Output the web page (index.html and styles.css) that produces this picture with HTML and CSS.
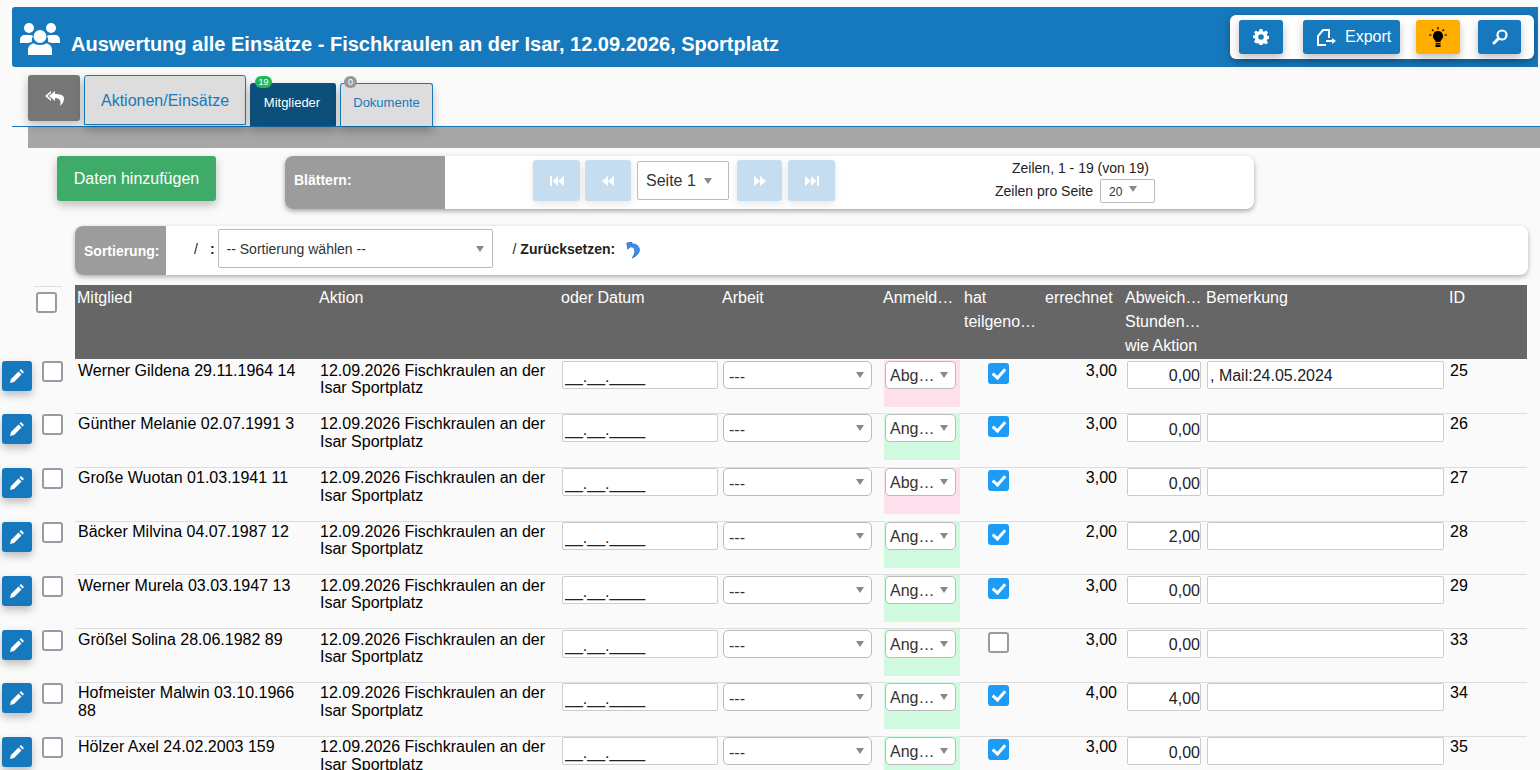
FILE: index.html
```html
<!DOCTYPE html>
<html lang="de">
<head>
    <meta charset="UTF-8">
    <title>Auswertung alle Einsätze</title>
    <link rel="stylesheet" href="styles.css">
</head>
<body>
    <header class="topbar">
        <svg class="users-icon" viewBox="0 0 40 32" fill="#fff">
            <circle cx="9" cy="5" r="5"/>
            <circle cx="31" cy="5" r="5"/>
            <circle cx="20" cy="13.5" r="6.5"/>
            <path d="M0 20v-3c0-3 2-5 5-5h5c1 0 2 .4 3 1-1 2-1.500 4-1 6-2 .4-4 1-5 1z"/>
            <path d="M40 20v-3c0-3-2-5-5-5h-5c-1 0-2 .4-3 1 1 2 1.500 4 1 6 2 .4 4 1 5 1z"/>
            <path d="M8 32v-5c0-4 3-6.500 6-6.500 2 1 4 1.500 6 1.500s4-.5 6-1.500c3 0 6 2.500 6 6.500v5z"/>
        </svg>
        <h1>Auswertung alle Einsätze - Fischkraulen an der Isar, 12.09.2026, Sportplatz</h1>
        <div class="toolbar">
            <button class="btn btn-gear">
                <svg width="16" height="16" viewBox="0 0 16 16"><path fill="#fff" fill-rule="evenodd" d="M6.600 0h2.800l.4 2.200 1.300.6L13 1.500l2 2-1.300 1.900.6 1.300 2.200.4v2.800l-2.200.4-.6 1.300 1.300 1.900-2 2-1.900-1.300-1.300.6-.4 2.200H6.600l-.4-2.200-1.300-.6L3 14.500l-2-2 1.300-1.900-.6-1.300L-.5 8.900V6.600l2.200-.4.6-1.300L1 3.500l2-2 1.900 1.300 1.300-.6zM8 5.200a2.800 2.800 0 1 0 0 5.600 2.800 2.800 0 0 0 0-5.600z"/></svg>
            </button>
            <button class="btn btn-export">
                <svg width="19" height="17" viewBox="0 0 19 17"><path fill="none" stroke="#fff" stroke-width="2" d="M12 9V1H6L1 7v9h8"/><path fill="#fff" d="M9 11h6V9l4 3-4 3v-2H9z"/></svg>
                Export
            </button>
            <button class="btn btn-idea">
                <svg width="18" height="20" viewBox="0 0 18 20"><path fill="#000" d="M9 4a5 5 0 0 1 3 9l-.5 2h-5L6 13A5 5 0 0 1 9 4zM6.500 16h5v1.500h-5zM6.500 18h5v2h-5z"/><path stroke="#000" stroke-width="1.200" d="M9 0v2.500M3 2.500l1.500 1.500M15 2.500L13.500 4M0 8h2.500M15.500 8H18"/></svg>
            </button>
            <button class="btn btn-search">
                <svg width="16" height="16" viewBox="0 0 16 16"><circle cx="10" cy="6" r="4.500" fill="none" stroke="#fff" stroke-width="2.200"/><path stroke="#fff" stroke-width="3" stroke-linecap="round" d="M6 10l-4 4"/></svg>
            </button>
        </div>
    </header>

    <nav class="tabs">
        <button class="back-btn">
            <svg width="19" height="15" viewBox="0 0 19 15"><path fill="#fff" d="M6 0L0 5l6 5V8L2.500 5 6 2z"/><path fill="#fff" d="M10 0L4 5l6 5V7c3 0 5 1 5.500 4 .2 1.500-.2 3-.7 4 3-2 4.200-5 4.200-7.500C19 4 15 3 10 3z"/></svg>
        </button>
        <a class="tab tab-large">Aktionen/Einsätze</a>
        <a class="tab tab-active">Mitglieder<span class="badge badge-green">19</span></a>
        <a class="tab">Dokumente<span class="badge badge-grey">0</span></a>
    </nav>
    <div class="greybar"></div>

    <section class="actions">
        <button class="add-btn">Daten hinzufügen</button>
        <div class="pager">
            <div class="panel-label pager-label">Blättern:</div>
            <div class="pager-nav">
                <button class="page-btn page-w47"><svg width="14" height="10" viewBox="0 0 14 10"><path fill="#fff" d="M0 0h2v10H0zM2.500 5L8 0v10zM8 5l6-5v10z"/></svg></button>
                <button class="page-btn page-w46"><svg width="12" height="10" viewBox="0 0 12 10"><path fill="#fff" d="M0 5l6-5v10zM6 5l6-5v10z"/></svg></button>
                <div class="select page-select">Seite 1<i class="caret"></i></div>
                <button class="page-btn page-w45 page-next"><svg width="12" height="10" viewBox="0 0 12 10"><path fill="#fff" d="M12 5L6 0v10zM6 5L0 0v10z"/></svg></button>
                <button class="page-btn page-w47 page-last"><svg width="14" height="10" viewBox="0 0 14 10"><path fill="#fff" d="M14 0h-2v10h2zM11.500 5L6 0v10zM6 5L0 0v10z"/></svg></button>
            </div>
            <div class="pager-info">
                <div>Zeilen, 1 - 19 (von 19)</div>
                <div class="per-page">Zeilen pro Seite <div class="select per-select">20<i class="caret"></i></div></div>
            </div>
        </div>
    </section>

    <section class="sortbar">
        <div class="panel-label sort-label">Sortierung:</div>
        <span class="sort-slash">/</span>
        <b class="sort-colon">:</b>
        <div class="select sort-select">-- Sortierung wählen --<i class="caret"></i></div>
        <span class="sort-reset">/ <b>Zurücksetzen:</b></span>
        <svg class="undo-icon" width="15" height="17" viewBox="0 0 17 19"><path fill="#3b8df0" stroke="#1b5fc0" stroke-width=".8" d="M1 1l1 7 2.500-2.500C7 5 9.500 6 10 9c.4 3-1 6-3 9 5-2 9-6 8-10.500C14 3 9 1 5.500 2.500L7 0z"/></svg>
    </section>

    <div class="table-head">
        <div class="head-tools"><span class="check head-check"></span></div>
        <div class="cells head-cells">
            <div>Mitglied</div>
            <div>Aktion</div>
            <div>oder Datum</div>
            <div>Arbeit</div>
            <div>Anmeld…</div>
            <div>hat<br>teilgeno…</div>
            <div>errechnet</div>
            <div>Abweich…<br>Stunden…<br>wie Aktion</div>
            <div>Bemerkung</div>
            <div>ID</div>
        </div>
    </div>

    <div class="row">
        <div class="row-tools"><button class="edit-btn"><svg width="14" height="14" viewBox="0 0 14 14"><path fill="#fff" d="M0 14l1-4 7.500-7.500 3 3L4 13zM9.500 1.500L11 0l3 3-1.500 1.500z"/></svg></button><span class="check"></span></div>
        <div class="cells">
            <div class="name">Werner Gildena 29.11.1964 14</div>
            <div class="aktion">12.09.2026 Fischkraulen an der Isar Sportplatz</div>
            <div><input class="field date" value="__.__.____"></div>
            <div><div class="select work">---<i class="caret"></i></div></div>
            <div class="state state-no"><div class="select">Abg…<i class="caret"></i></div></div>
            <div class="center"><span class="tick"></span></div>
            <div class="num">3,00</div>
            <div><input class="field dev" value="0,00"></div>
            <div><input class="field note" value=", Mail:24.05.2024"></div>
            <div class="id">25</div>
        </div>
    </div>
    <div class="row">
        <div class="row-tools"><button class="edit-btn"><svg width="14" height="14" viewBox="0 0 14 14"><path fill="#fff" d="M0 14l1-4 7.500-7.500 3 3L4 13zM9.500 1.500L11 0l3 3-1.500 1.500z"/></svg></button><span class="check"></span></div>
        <div class="cells">
            <div class="name">Günther Melanie 02.07.1991 3</div>
            <div class="aktion">12.09.2026 Fischkraulen an der Isar Sportplatz</div>
            <div><input class="field date" value="__.__.____"></div>
            <div><div class="select work">---<i class="caret"></i></div></div>
            <div class="state state-yes"><div class="select">Ang…<i class="caret"></i></div></div>
            <div class="center"><span class="tick"></span></div>
            <div class="num">3,00</div>
            <div><input class="field dev" value="0,00"></div>
            <div><input class="field note" value=""></div>
            <div class="id">26</div>
        </div>
    </div>
    <div class="row">
        <div class="row-tools"><button class="edit-btn"><svg width="14" height="14" viewBox="0 0 14 14"><path fill="#fff" d="M0 14l1-4 7.500-7.500 3 3L4 13zM9.500 1.500L11 0l3 3-1.500 1.500z"/></svg></button><span class="check"></span></div>
        <div class="cells">
            <div class="name">Große Wuotan 01.03.1941 11</div>
            <div class="aktion">12.09.2026 Fischkraulen an der Isar Sportplatz</div>
            <div><input class="field date" value="__.__.____"></div>
            <div><div class="select work">---<i class="caret"></i></div></div>
            <div class="state state-no"><div class="select">Abg…<i class="caret"></i></div></div>
            <div class="center"><span class="tick"></span></div>
            <div class="num">3,00</div>
            <div><input class="field dev" value="0,00"></div>
            <div><input class="field note" value=""></div>
            <div class="id">27</div>
        </div>
    </div>
    <div class="row">
        <div class="row-tools"><button class="edit-btn"><svg width="14" height="14" viewBox="0 0 14 14"><path fill="#fff" d="M0 14l1-4 7.500-7.500 3 3L4 13zM9.500 1.500L11 0l3 3-1.500 1.500z"/></svg></button><span class="check"></span></div>
        <div class="cells">
            <div class="name">Bäcker Milvina 04.07.1987 12</div>
            <div class="aktion">12.09.2026 Fischkraulen an der Isar Sportplatz</div>
            <div><input class="field date" value="__.__.____"></div>
            <div><div class="select work">---<i class="caret"></i></div></div>
            <div class="state state-yes"><div class="select">Ang…<i class="caret"></i></div></div>
            <div class="center"><span class="tick"></span></div>
            <div class="num">2,00</div>
            <div><input class="field dev" value="2,00"></div>
            <div><input class="field note" value=""></div>
            <div class="id">28</div>
        </div>
    </div>
    <div class="row">
        <div class="row-tools"><button class="edit-btn"><svg width="14" height="14" viewBox="0 0 14 14"><path fill="#fff" d="M0 14l1-4 7.500-7.500 3 3L4 13zM9.500 1.500L11 0l3 3-1.500 1.500z"/></svg></button><span class="check"></span></div>
        <div class="cells">
            <div class="name">Werner Murela 03.03.1947 13</div>
            <div class="aktion">12.09.2026 Fischkraulen an der Isar Sportplatz</div>
            <div><input class="field date" value="__.__.____"></div>
            <div><div class="select work">---<i class="caret"></i></div></div>
            <div class="state state-yes"><div class="select">Ang…<i class="caret"></i></div></div>
            <div class="center"><span class="tick"></span></div>
            <div class="num">3,00</div>
            <div><input class="field dev" value="0,00"></div>
            <div><input class="field note" value=""></div>
            <div class="id">29</div>
        </div>
    </div>
    <div class="row">
        <div class="row-tools"><button class="edit-btn"><svg width="14" height="14" viewBox="0 0 14 14"><path fill="#fff" d="M0 14l1-4 7.500-7.500 3 3L4 13zM9.500 1.500L11 0l3 3-1.500 1.500z"/></svg></button><span class="check"></span></div>
        <div class="cells">
            <div class="name">Größel Solina 28.06.1982 89</div>
            <div class="aktion">12.09.2026 Fischkraulen an der Isar Sportplatz</div>
            <div><input class="field date" value="__.__.____"></div>
            <div><div class="select work">---<i class="caret"></i></div></div>
            <div class="state state-yes"><div class="select">Ang…<i class="caret"></i></div></div>
            <div class="center"><span class="check"></span></div>
            <div class="num">3,00</div>
            <div><input class="field dev" value="0,00"></div>
            <div><input class="field note" value=""></div>
            <div class="id">33</div>
        </div>
    </div>
    <div class="row">
        <div class="row-tools"><button class="edit-btn"><svg width="14" height="14" viewBox="0 0 14 14"><path fill="#fff" d="M0 14l1-4 7.500-7.500 3 3L4 13zM9.500 1.500L11 0l3 3-1.500 1.500z"/></svg></button><span class="check"></span></div>
        <div class="cells">
            <div class="name">Hofmeister Malwin 03.10.1966 88</div>
            <div class="aktion">12.09.2026 Fischkraulen an der Isar Sportplatz</div>
            <div><input class="field date" value="__.__.____"></div>
            <div><div class="select work">---<i class="caret"></i></div></div>
            <div class="state state-yes"><div class="select">Ang…<i class="caret"></i></div></div>
            <div class="center"><span class="tick"></span></div>
            <div class="num">4,00</div>
            <div><input class="field dev" value="4,00"></div>
            <div><input class="field note" value=""></div>
            <div class="id">34</div>
        </div>
    </div>
    <div class="row">
        <div class="row-tools"><button class="edit-btn"><svg width="14" height="14" viewBox="0 0 14 14"><path fill="#fff" d="M0 14l1-4 7.500-7.500 3 3L4 13zM9.500 1.500L11 0l3 3-1.500 1.500z"/></svg></button><span class="check"></span></div>
        <div class="cells">
            <div class="name">Hölzer Axel 24.02.2003 159</div>
            <div class="aktion">12.09.2026 Fischkraulen an der Isar Sportplatz</div>
            <div><input class="field date" value="__.__.____"></div>
            <div><div class="select work">---<i class="caret"></i></div></div>
            <div class="state state-yes"><div class="select">Ang…<i class="caret"></i></div></div>
            <div class="center"><span class="tick"></span></div>
            <div class="num">3,00</div>
            <div><input class="field dev" value="0,00"></div>
            <div><input class="field note" value=""></div>
            <div class="id">35</div>
        </div>
    </div>
</body>
</html>
```

FILE: styles.css
```css
html, body {
    height: 770px;
    overflow: hidden;
}
body {
    margin: 0;
    background-color: #fafafa;
    font-family: "Liberation Sans", Arial, sans-serif;
    font-size: 16px;
    color: #222;
}
button {
    border: none;
    padding: 0;
    font-family: inherit;
    cursor: pointer;
}

/* top bar */
.topbar {
    display: flex;
    align-items: center;
    height: 60px;
    margin: 7px 2px 0 12px;
    background-color: #1779bd;
    border-radius: 3px 0 0 3px;
}
.users-icon {
    width: 40px;
    height: 32px;
    margin: 4px 11px 0 8px;
}
.topbar h1 {
    flex: 1;
    margin: 14px 0 0 0;
    font-size: 20px;
    font-weight: bold;
    color: #fff;
}
.toolbar {
    display: flex;
    align-items: flex-start;
    box-sizing: border-box;
    width: 304px;
    height: 44px;
    margin-right: 4px;
    padding: 5px 0 0 9px;
    background-color: #fff;
    border-radius: 6px;
    box-shadow: 0 3px 8px rgba(0, 0, 0, 0.3);
}
.btn {
    display: flex;
    align-items: center;
    justify-content: center;
    height: 34px;
    background-color: #1779bd;
    color: #fff;
    font-size: 16px;
    border-radius: 3px;
    box-shadow: 0 4px 8px rgba(0, 0, 0, 0.25);
}
.btn-gear { width: 44px; }
.btn-export {
    justify-content: flex-start;
    box-sizing: border-box;
    width: 97px;
    margin-left: 20px;
    padding-left: 14px;
    gap: 9px;
}
.btn-idea { width: 44px; margin-left: 16px; background-color: #ffae00; }
.btn-search { width: 43px; margin-left: 18px; }

/* tabs */
.tabs {
    display: flex;
    align-items: flex-end;
    gap: 4px;
    height: 51px;
    margin: 8px 0 0 12px;
    padding-left: 16px;
    border-bottom: 1px solid #1779bd;
}
.back-btn {
    display: flex;
    align-items: center;
    justify-content: center;
    align-self: flex-start;
    width: 52px;
    height: 46px;
    background-color: #777;
    border-radius: 3px;
    box-shadow: 0 4px 10px rgba(0, 0, 0, 0.25);
}
.tab {
    position: relative;
    display: flex;
    align-items: center;
    justify-content: center;
    box-sizing: border-box;
    width: 93px;
    height: 43px;
    padding-bottom: 5px;
    font-size: 13px;
    color: #1779bd;
    background-color: #ddd;
    border: 1px solid #1779bd;
    border-bottom-width: 0;
    border-radius: 3px 3px 0 0;
    box-shadow: 0 5px 10px rgba(0, 0, 0, 0.25);
}
.tab-large {
    width: 162px;
    height: 50px;
    margin-bottom: 1px;
    padding-bottom: 0;
    padding-top: 1px;
    font-size: 16px;
    border-bottom-width: 1px;
}
.tab-active {
    width: 86px;
    padding-right: 2px;
    color: #fff;
    background-color: #0c4f7a;
    border-color: #0c4f7a;
}
.badge {
    position: absolute;
    top: -8px;
    height: 12px;
    font-size: 9px;
    line-height: 12px;
    text-align: center;
    color: #fff;
    border-radius: 6px;
}
.badge-green { left: 4px; width: 17px; background-color: #22b85a; }
.badge-grey { left: 3px; width: 13px; background-color: #999; }
.greybar {
    height: 21px;
    margin-left: 28px;
    background-color: #a6a6a6;
}

/* add button + pager */
.actions {
    display: flex;
    align-items: flex-start;
    margin: 8px 0 0 57px;
}
.add-btn {
    width: 159px;
    height: 45px;
    font-size: 16px;
    color: #fff;
    background-color: #3fab68;
    border-radius: 3px;
    box-shadow: 0 4px 10px rgba(0, 0, 0, 0.25);
}
.pager {
    display: flex;
    width: 969px;
    height: 53px;
    margin-left: 69px;
    background-color: #fff;
    border-radius: 8px;
    box-shadow: 0 2px 5px rgba(0, 0, 0, 0.35);
}
.panel-label {
    display: flex;
    align-items: center;
    flex-shrink: 0;
    box-sizing: border-box;
    padding-left: 9px;
    font-size: 14px;
    font-weight: bold;
    color: #fff;
    background-color: #9c9c9c;
    border-radius: 8px 0 0 8px;
}
.pager-label { width: 160px; padding-bottom: 6px; }
.pager-nav {
    display: flex;
    align-items: flex-start;
    gap: 5px;
    width: 400px;
    padding: 4px 0 0 88px;
    box-sizing: border-box;
}
.page-btn {
    display: flex;
    align-items: center;
    justify-content: center;
    height: 41px;
    background-color: #c6dcef;
    border-radius: 3px;
    box-shadow: 0 3px 8px rgba(0, 0, 0, 0.1);
}
.page-w47 { width: 47px; }
.page-w46 { width: 46px; }
.page-w45 { width: 45px; }
.page-next { margin-left: 3px; }
.page-last { margin-left: 1px; }
.pager-info {
    width: 277px;
    padding-top: 4px;
    margin-left: 97px;
    font-size: 14px;
    line-height: 16px;
    text-align: center;
}
.per-page {
    display: flex;
    align-items: center;
    justify-content: center;
    gap: 7px;
    margin-top: 3px;
    padding-right: 11px;
}

/* selects */
.select {
    position: relative;
    box-sizing: border-box;
    background-color: #fff;
    border: 1px solid #bbb;
    border-radius: 5px;
    color: #333;
}
.caret {
    position: absolute;
    top: 50%;
    right: 7px;
    margin-top: -3px;
    border-left: 4px solid transparent;
    border-right: 4px solid transparent;
    border-top: 6px solid #888;
}
.page-select {
    width: 92px;
    height: 39px;
    margin: 1px 0 0 1px;
    padding-left: 8px;
    line-height: 37px;
    border-radius: 2px;
}
.page-select .caret { right: 16px; }
.per-select {
    width: 55px;
    height: 24px;
    padding-left: 8px;
    font-size: 12px;
    line-height: 24px;
    text-align: left;
    border-radius: 2px;
}
.per-select .caret { right: 17px; margin-top: -5px; }

/* sort bar */
.sortbar {
    display: flex;
    align-items: flex-start;
    width: 1453px;
    height: 49px;
    margin: 17px 0 0 75px;
    font-size: 14px;
    background-color: #fff;
    border-radius: 8px;
    box-shadow: 0 2px 5px rgba(0, 0, 0, 0.3);
}
.sort-label { width: 91px; height: 49px; }
.sort-slash { margin: 15px 0 0 28px; }
.sort-colon { margin: 15px 0 0 12px; }
.sort-select {
    width: 275px;
    height: 39px;
    margin: 3px 0 0 3px;
    padding-left: 8px;
    line-height: 39px;
    border-radius: 2px;
}
.sort-select .caret { right: 8px; }
.sort-reset { margin: 15px 0 0 20px; }
.undo-icon { margin: 16px 0 0 11px; }

/* table */
.table-head {
    display: flex;
    margin: 10px 0 0.6px 0;
}
.head-tools {
    box-sizing: content-box;
    width: 75px;
    flex-shrink: 0;
    position: relative;
}
.head-check {
    position: absolute;
    top: 7px;
    left: 36px;
}
.head-tools::before {
    content: "";
    position: absolute;
    top: 1px;
    left: 34px;
    width: 28px;
    border-top: 1px solid #ddd;
}
.cells {
    display: grid;
    grid-template-columns: 242px 242px 161px 161px 81px 81px 80px 81px 243px 80px;
    box-sizing: border-box;
    width: 1452px;
}
.head-cells {
    height: 74px;
    padding-top: 1px;
    line-height: 24px;
    color: #fff;
    background-color: #666;
}
.head-cells > div {
    padding-left: 2px;
}
.row {
    display: flex;
    box-sizing: border-box;
    height: 53.8px;
}
.row .cells {
    margin-bottom: -0.6px;
    border-bottom: 1px solid #ddd;
    line-height: 17.5px;
    color: #000;
}
.row-tools {
    display: flex;
    align-items: flex-start;
    gap: 10px;
    box-sizing: border-box;
    width: 75px;
    flex-shrink: 0;
    padding: 1px 0 0 2px;
}
.edit-btn {
    display: flex;
    align-items: center;
    justify-content: center;
    width: 30px;
    height: 30px;
    background-color: #1779bd;
    border-radius: 3px;
    box-shadow: 0 4px 8px rgba(0, 0, 0, 0.25);
}
.check {
    display: block;
    box-sizing: border-box;
    width: 21px;
    height: 21px;
    background-color: #fff;
    border: 2px solid #9a9aa6;
    border-radius: 3px;
}
.tick {
    position: relative;
    display: block;
    width: 21px;
    height: 21px;
    background-color: #1e9cf5;
    border-radius: 3px;
}
.tick::after {
    content: "";
    position: absolute;
    left: 7px;
    top: 3px;
    width: 5px;
    height: 10px;
    border: solid #fff;
    border-width: 0 3px 3px 0;
    transform: rotate(42deg);
}
.name {
    padding: 2px 6px 0 3px;
}
.aktion {
    padding: 2px 12px 0 3px;
}
.field {
    box-sizing: border-box;
    height: 28px;
    margin: 1px 0 0 0;
    padding: 3px 4px 0 4px;
    font-family: inherit;
    font-size: 16px;
    color: #222;
    background-color: #fff;
    border: 1px solid #ccc;
    border-radius: 2px;
    outline: none;
}
.date {
    width: 156px;
    margin-left: 3px;
    padding-left: 2px;
    padding-top: 4px;
}
.dev {
    width: 74px;
    margin-left: 4px;
    padding-right: 0;
    text-align: right;
}
.note {
    width: 237px;
    margin-left: 3px;
    padding-left: 2px;
}
.work {
    width: 149px;
    height: 28px;
    margin: 1px 0 0 3px;
    padding-left: 5px;
    font-size: 16px;
    line-height: 30px;
}
.state {
    width: 76px;
    height: 47px;
    margin-left: 3px;
}
.state .select {
    width: 71px;
    height: 28px;
    margin: 1px 0 0 1px;
    padding-left: 4px;
    line-height: 28px;
}
.state-no { background-color: #fde0ec; }
.state-yes { background-color: #d0fadf; }
.center {
    display: flex;
    justify-content: center;
    align-items: flex-start;
    padding: 3px 8px 0 0;
}
.num {
    padding: 2px 6px 0 0;
    text-align: right;
}
.id {
    padding: 2px 0 0 3px;
}
```
